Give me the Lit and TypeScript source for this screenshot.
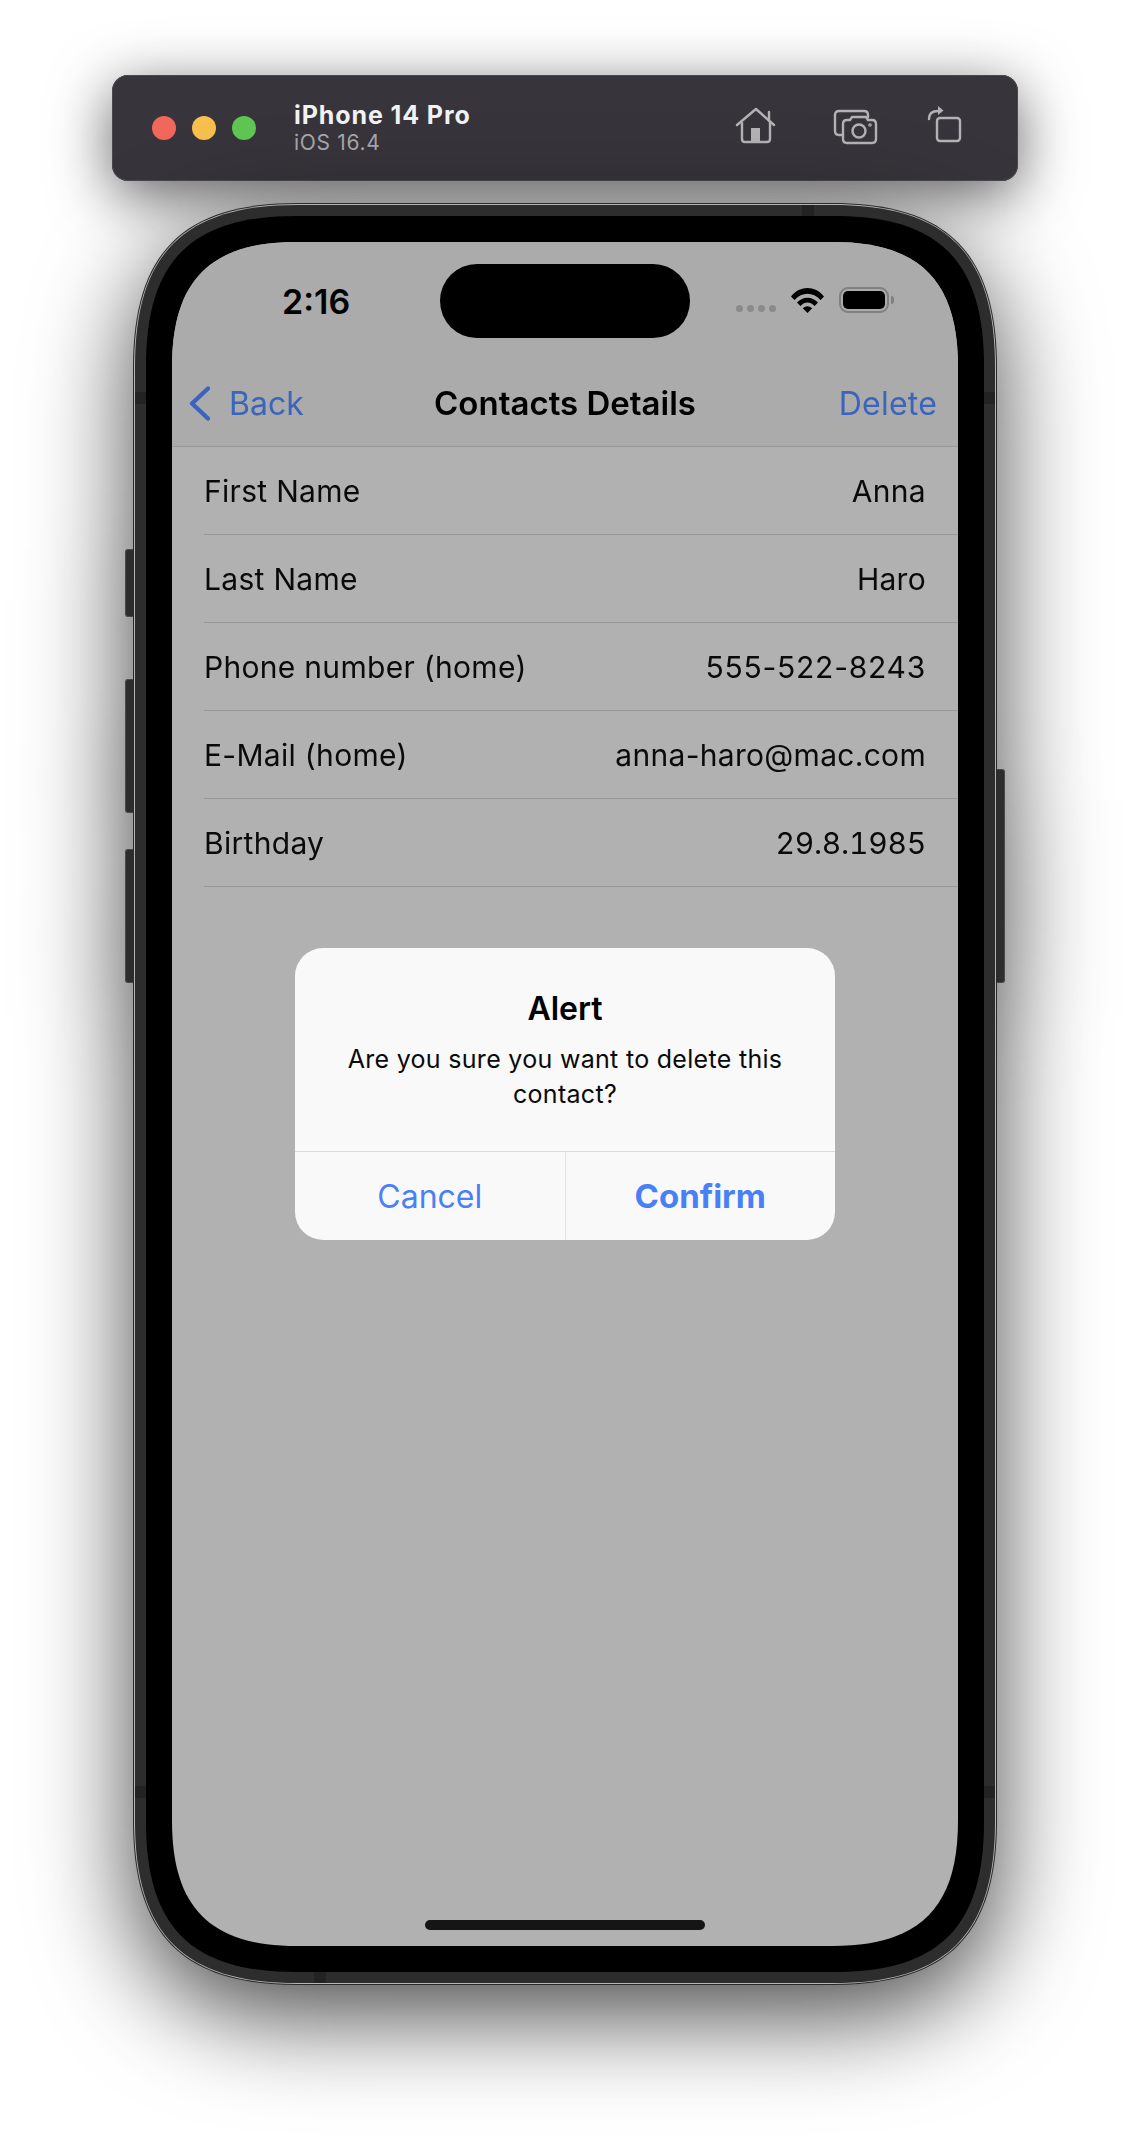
import { css, html, LitElement } from "lit";
import { customElement } from "lit/decorators.js";

const rows = [
  { label: "First Name", value: "Anna", kind: "" },
  { label: "Last Name", value: "Haro", kind: "" },
  { label: "Phone number (home)", value: "555-522-8243", kind: "phone-no" },
  { label: "E-Mail (home)", value: "anna-haro@mac.com", kind: "" },
  { label: "Birthday", value: "29.8.1985", kind: "date" },
];

// continuous corners, border-radius is too round for the device shape
function corners(w: number, h: number, e: number, k = 0.3) {
  const c = e * k;
  const path =
    `M${e} 0H${w - e}C${w - c} 0 ${w} ${c} ${w} ${e}V${h - e}` +
    `C${w} ${h - c} ${w - c} ${h} ${w - e} ${h}H${e}` +
    `C${c} ${h} 0 ${h - c} 0 ${h - e}V${e}C0 ${c} ${c} 0 ${e} 0Z`;
  return `clip-path: path('${path}')`;
}

@customElement("app-root")
export class AppRoot extends LitElement {
  render() {
    return html`
      <div class="toolbar">
        <div class="lights">
          <span class="light red"></span>
          <span class="light yellow"></span>
          <span class="light green"></span>
        </div>
        <div class="device">
          <div class="device-name">iPhone 14 Pro</div>
          <div class="device-os">iOS 16.4</div>
        </div>
        <svg class="tools" viewBox="0 0 250 56" width="250" height="56" fill="none" stroke="#b4b2b5" stroke-width="2.4" stroke-linecap="round" stroke-linejoin="round">
          <path d="M12 27 L31 11 L49 27" />
          <path d="M44 14 V23" />
          <path d="M17 25 V41 Q17 44 20 44 H42 Q45 44 45 41 V25" />
          <rect x="26" y="30" width="9" height="14" fill="#b4b2b5" stroke="none" />
          <path d="M118 37 H114 Q110 37 110 33 V17 Q110 13 114 13 H139 Q143 13 143 17 V19" />
          <path d="M122 45 H147 Q151 45 151 41 V26 Q151 22 147 22 H143 L141 19 H127 L125 22 H122 Q118 22 118 26 V41 Q118 45 122 45 Z" />
          <circle cx="134" cy="33" r="6.5" />
          <circle cx="145" cy="27" r="0.6" />
          <rect x="212" y="20" width="23" height="23" rx="3" />
          <path d="M204 21 Q204 13 213 13" />
          <path d="M213 8 L218.5 12.5 L213 17 Z" fill="#b4b2b5" stroke="none" />
        </svg>
      </div>
      <div class="phone">
        <span class="side b1"></span>
        <span class="side b2"></span>
        <span class="side b3"></span>
        <span class="side b4"></span>
        <div class="rim" style=${corners(864, 1782, 165)}>
          <div class="ring" style=${corners(862, 1780, 164)}>
            <div class="frame" style=${corners(860, 1778, 162)}>
              <span class="band top"></span>
              <span class="band left-a"></span>
              <span class="band left-b"></span>
              <span class="band right-a"></span>
              <span class="band right-b"></span>
              <span class="band bottom"></span>
              <div class="bezel" style=${corners(838, 1756, 150)}>
                <div class="screen" style=${corners(786, 1704, 125, 0.307)}>
                  <div class="header">
                    <div class="status">
                      <div class="time">2:16</div>
                      <div class="island"></div>
                      <div class="signal"><i></i><i></i><i></i><i></i></div>
                      <svg class="wifi" viewBox="0 0 33 25" width="33" height="25">
                        <path d="M0 8.5 C9 -2.8 24 -2.8 33 8.5 L29.5 12 C22 3.8 11 3.8 3.5 12 Z" />
                        <path d="M6 14.5 C12 8 21 8 27 14.5 L23.6 18 C19 13.4 14 13.4 9.4 18 Z" />
                        <path d="M11.8 20.3 C14.8 17.6 18.2 17.6 21.2 20.3 L16.5 25 Z" />
                      </svg>
                      <div class="battery"><span class="charge"></span></div>
                      <span class="battery-cap"></span>
                    </div>
                    <div class="nav">
                      <div class="nav-back">
                        <svg viewBox="0 0 21 35" width="21" height="35" fill="none" stroke="#3b64bc" stroke-width="4.4" stroke-linecap="round" stroke-linejoin="round">
                          <path d="M19 2.5 L3 17.5 L19 32.5" />
                        </svg>
                        <span>Back</span>
                      </div>
                      <div class="nav-title">Contacts Details</div>
                      <div class="nav-delete">Delete</div>
                    </div>
                  </div>
                  <div class="list">
                    ${rows.map(
                      (row) => html`
                        <div class="row">
                          <span>${row.label}</span>
                          <span class=${row.kind}>${row.value}</span>
                        </div>
                      `
                    )}
                  </div>
                  <div class="home-indicator"></div>
                  <div class="overlay">
                    <div class="alert">
                      <div class="alert-body">
                        <div class="alert-title">Alert</div>
                        <div class="alert-text">Are you sure you want to delete this contact?</div>
                      </div>
                      <div class="alert-actions">
                        <div class="action">Cancel</div>
                        <div class="action strong">Confirm</div>
                      </div>
                    </div>
                  </div>
                </div>
              </div>
            </div>
          </div>
        </div>
      </div>
    `;
  }

  static styles = css`
    :host {
      display: block;
      height: 2136px;
      overflow: hidden;
      background: #fff;
      padding-top: 75px;
      box-sizing: border-box;
      font-family: Inter, "Liberation Sans", sans-serif;
      color: #000;
    }

    .toolbar {
      display: flex;
      align-items: center;
      box-sizing: border-box;
      width: 906px;
      height: 106px;
      margin-left: 112px;
      padding: 0 43px 0 40px;
      border-radius: 16px;
      background: #37353b;
      box-shadow: inset 0 0 0 1px #4a484e, 0 14px 60px rgba(0, 0, 0, 0.62);
    }

    .lights {
      display: flex;
      gap: 16px;
    }

    .light {
      width: 24px;
      height: 24px;
      border-radius: 50%;
    }

    .red {
      background: #f2675c;
    }

    .yellow {
      background: #f7c04e;
    }

    .green {
      background: #5fc653;
    }

    .device {
      margin-left: 38px;
      flex: 1;
    }

    .device-name {
      font-size: 25px;
      font-weight: 700;
      letter-spacing: 0.9px;
      line-height: 29px;
      color: #f2f2f3;
    }

    .device-os {
      font-size: 21px;
      letter-spacing: 0.7px;
      line-height: 26px;
      color: #a9a7ac;
    }

    .tools {
      margin-bottom: 4px;
    }

    .phone {
      position: relative;
      width: 864px;
      height: 1782px;
      margin: 22px 0 0 133px;
      filter: drop-shadow(0 30px 50px rgba(0, 0, 0, 0.72));
    }

    .rim {
      height: 100%;
      box-sizing: border-box;
      padding: 1px;
      background: #2a2a2a;
    }

    .ring {
      height: 100%;
      box-sizing: border-box;
      padding: 1px;
      background: #b5b5b5;
    }

    .frame {
      position: relative;
      height: 100%;
      box-sizing: border-box;
      padding: 11px;
      background: #2d2d2d;
    }

    .side {
      position: absolute;
      width: 8px;
      background: #2d2d2d;
      border: 1px solid #4a4a4a;
      box-sizing: border-box;
    }

    .b1,
    .b2,
    .b3 {
      left: -8px;
      border-radius: 3px 0 0 3px;
      border-right: none;
    }

    .b1 {
      top: 346px;
      height: 68px;
    }

    .b2 {
      top: 476px;
      height: 134px;
    }

    .b3 {
      top: 646px;
      height: 134px;
    }

    .b4 {
      right: -8px;
      top: 566px;
      height: 214px;
      border-radius: 0 3px 3px 0;
      border-left: none;
    }

    .band {
      position: absolute;
      background: #232323;
    }

    .band.top {
      top: 0;
      left: 667px;
      width: 12px;
      height: 11px;
    }

    .band.left-a,
    .band.left-b,
    .band.right-a,
    .band.right-b {
      width: 11px;
      height: 12px;
    }

    .band.left-a {
      left: 0;
      top: 187px;
    }

    .band.left-b {
      left: 0;
      top: 1581px;
    }

    .band.right-a {
      right: 0;
      top: 187px;
    }

    .band.right-b {
      right: 0;
      top: 1581px;
    }

    .band.bottom {
      bottom: 0;
      left: 179px;
      width: 12px;
      height: 11px;
    }

    .bezel {
      position: relative;
      height: 100%;
      box-sizing: border-box;
      padding: 26px;
      background: #000;
    }

    .screen {
      position: relative;
      height: 100%;
      overflow: hidden;
      background: #b1b1b1;
    }

    .header {
      background: #ababab;
      border-bottom: 1px solid #989898;
    }

    .status {
      display: flex;
      align-items: flex-start;
      box-sizing: border-box;
      height: 118px;
      padding: 22px 0 0 110px;
    }

    .time {
      width: 66px;
      margin-top: 18px;
      font-size: 34px;
      font-weight: 600;
      line-height: 40px;
      white-space: nowrap;
    }

    .island {
      width: 250px;
      height: 74px;
      margin-left: 92px;
      border-radius: 37px;
      background: #000;
    }

    .signal {
      display: flex;
      gap: 4px;
      margin: 41px 0 0 46px;
    }

    .signal i {
      width: 7px;
      height: 7px;
      border-radius: 50%;
      background: #8a8a8a;
    }

    .wifi {
      margin: 24px 0 0 15px;
    }

    .battery {
      box-sizing: border-box;
      width: 50px;
      height: 26px;
      margin: 23px 0 0 15px;
      padding: 2px;
      border: 2px solid #808080;
      border-radius: 9px;
    }

    .charge {
      display: block;
      height: 100%;
      border-radius: 5px;
      background: #000;
    }

    .battery-cap {
      width: 3px;
      height: 8px;
      margin: 32px 0 0 2px;
      border-radius: 0 4px 4px 0;
      background: #808080;
    }

    .nav {
      display: grid;
      grid-template-columns: 1fr auto 1fr;
      align-items: center;
      height: 86px;
      padding: 0 21px;
    }

    .nav-back {
      display: flex;
      align-items: center;
      gap: 19px;
      margin-left: -4px;
      font-size: 32px;
      color: #3b64bc;
    }

    .nav-title {
      font-size: 33px;
      font-weight: 600;
    }

    .nav-delete {
      justify-self: end;
      font-size: 32px;
      letter-spacing: 0.2px;
      color: #3b64bc;
    }

    .row {
      display: flex;
      align-items: center;
      justify-content: space-between;
      box-sizing: border-box;
      height: 88px;
      margin-left: 32px;
      padding-right: 32px;
      font-size: 30px;
      letter-spacing: 0.3px;
      color: #0a0a0a;
      border-bottom: 1px solid #989898;
    }

    .phone-no {
      letter-spacing: 0.75px;
    }

    .date {
      font-variant-numeric: tabular-nums;
      letter-spacing: -0.2px;
    }

    .home-indicator {
      position: absolute;
      left: 253px;
      bottom: 16px;
      width: 280px;
      height: 10px;
      border-radius: 5px;
      background: #151515;
    }

    .overlay {
      position: absolute;
      inset: 0;
      display: flex;
      align-items: center;
      justify-content: center;
    }

    .alert {
      display: flex;
      flex-direction: column;
      width: 540px;
      height: 292px;
      border-radius: 28px;
      background: #f9f9f9;
    }

    .alert-body {
      flex: 1;
      padding: 0 40px;
      text-align: center;
    }

    .alert-title {
      margin-top: 41px;
      font-size: 32px;
      font-weight: 600;
      line-height: 40px;
    }

    .alert-text {
      margin-top: 13px;
      font-size: 25px;
      letter-spacing: 0.3px;
      line-height: 35px;
      color: #0a0a0a;
    }

    .alert-actions {
      display: flex;
      height: 88px;
      border-top: 1px solid #dcdcdc;
    }

    .action {
      display: flex;
      flex: 1;
      align-items: center;
      justify-content: center;
      font-size: 32px;
      color: #4a80f5;
    }

    .action.strong {
      font-size: 33px;
      font-weight: 700;
      border-left: 1px solid #e2e2e2;
    }
  `;
}
